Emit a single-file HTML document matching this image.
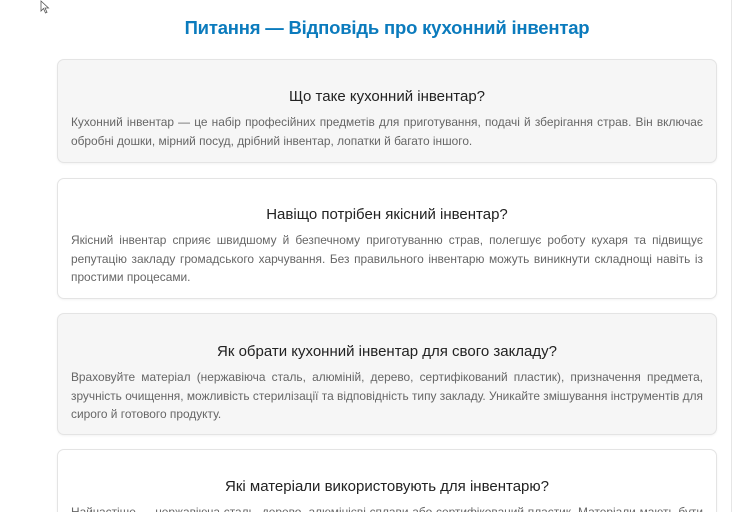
<!DOCTYPE html>
<html><head><meta charset="utf-8"><style>
html,body{margin:0;padding:0;background:#fff;width:751px;height:512px;overflow:hidden}
body{font-family:"Liberation Sans","DejaVu Sans",sans-serif;position:relative}
.vl{position:absolute;left:731px;top:0;width:1px;height:512px;background:#e6e6e6}
h1{position:absolute;left:0;width:774px;top:17px;margin:0;text-align:center;font-size:18.5px;font-weight:bold;color:#0b7bbd;letter-spacing:-0.2px}
.card{position:absolute;left:57px;width:632px;border:1px solid #e4e4e4;border-radius:7px;padding:0 13px;box-shadow:0 1px 2px rgba(0,0,0,0.05);overflow:hidden}
.g{background:#f6f6f6}.w{background:#fff}
.q{text-align:center;font-size:15px;color:#222;height:20px;line-height:20px}
.t{font-size:11.9px;color:#666;line-height:18.5px;text-align:justify;margin-top:6px}
</style></head><body>
<div class="vl"></div>
<svg style="position:absolute;left:40px;top:0" width="10" height="14"><path d="M1 1 L1 11 L3.5 8.5 L5.5 13 L7 12.3 L5 8 L8.5 8 Z" fill="#fff" stroke="#555" stroke-width="0.8"/></svg>
<h1>Питання — Відповідь про кухонний інвентар</h1>
<div class="card g" style="top:59px;height:102px">
<div class="q" style="margin-top:27px">Що таке кухонний інвентар?</div>
<div class="t">Кухонний інвентар — це набір професійних предметів для приготування, подачі й зберігання страв. Він включає обробні дошки, мірний посуд, дрібний інвентар, лопатки й багато іншого.</div>
</div>
<div class="card w" style="top:178px;height:119px">
<div class="q" style="margin-top:26px">Навіщо потрібен якісний інвентар?</div>
<div class="t">Якісний інвентар сприяє швидшому й безпечному приготуванню страв, полегшує роботу кухаря та підвищує репутацію закладу громадського харчування. Без правильного інвентарю можуть виникнути складнощі навіть із простими процесами.</div>
</div>
<div class="card g" style="top:313px;height:120px">
<div class="q" style="margin-top:28px">Як обрати кухонний інвентар для свого закладу?</div>
<div class="t">Враховуйте матеріал (нержавіюча сталь, алюміній, дерево, сертифікований пластик), призначення предмета, зручність очищення, можливість стерилізації та відповідність типу закладу. Уникайте змішування інструментів для сирого й готового продукту.</div>
</div>
<div class="card w" style="top:449px;height:70px">
<div class="q" style="margin-top:27px">Які матеріали використовують для інвентарю?</div>
<div class="t">Найчастіше — нержавіюча сталь, дерево, алюмінієві сплави або сертифікований пластик. Матеріали мають бути безпечними для контакту з харчовими продуктами.</div>
</div>
</body></html>
